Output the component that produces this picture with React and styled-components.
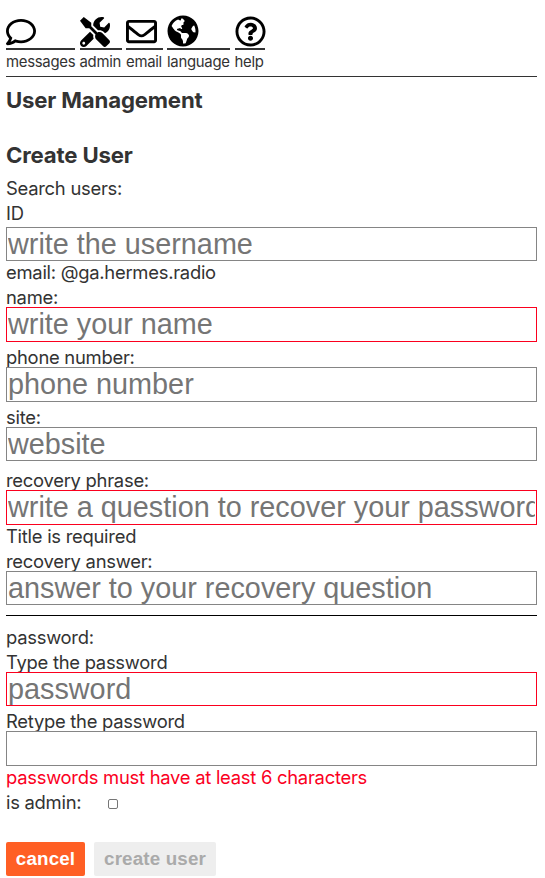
import React from "react";
import styled, { createGlobalStyle } from "styled-components";
import { FaRegComment, FaTools, FaRegEnvelope, FaGlobeAmericas, FaRegQuestionCircle } from "react-icons/fa";

const GlobalStyle = createGlobalStyle`
  *, *::before, *::after { box-sizing: border-box; }
  body {
    margin: 0;
    background: #fff;
    color: #333;
    font: 18.4px/23px Inter, "Noto Sans", sans-serif;
  }
`;

const Page = styled.div`
  padding: 16px 8px 2px 6px;
`;

const Nav = styled.nav`
  display: flex;
  gap: 4.5px;
  height: 61px;
  border-bottom: 1px solid #333;
`;

const NavItem = styled.a`
  width: ${(p) => p.$width}px;
  color: #333;
  font-size: 14.9px;
  letter-spacing: -0.28px;
  line-height: 24px;
  white-space: nowrap;
`;

const NavIcon = styled.span`
  display: flex;
  align-items: flex-start;
  height: 34px;
  border-bottom: 2px solid #333;

  svg {
    flex: none;
    width: ${(p) => p.$size}px;
    height: ${(p) => p.$size}px;
    margin-top: ${(p) => 30.5 - p.$size}px;
    color: #000;
  }
`;

const Title = styled.h1`
  margin: 9px 0 27px;
  font-size: 22.2px;
  font-weight: 700;
  letter-spacing: -0.17px;
  line-height: 28px;
`;

const Subtitle = styled(Title)`
  margin: 0 0 8px;
`;

const Form = styled.form`
  display: flex;
  flex-direction: column;
  gap: 4px;
`;

const Field = styled.div`
  display: flex;
  flex-direction: column;
  padding-top: ${(p) => p.$before || 0}px;
`;

const Line = styled.label`
  display: block;
  height: 21px;
  color: ${(p) => (p.$error ? "#fb001e" : "inherit")};
  letter-spacing: -0.26px;
  white-space: nowrap;
`;

const Input = styled.input`
  display: block;
  width: 100%;
  height: ${(p) => p.$height || 35}px;
  margin: ${(p) => p.$gap || 0}px 0 0;
  padding: 1px;
  border: 1px solid ${(p) => (p.$invalid ? "#fb001e" : "#858585")};
  border-radius: 0;
  outline: none;
  background: #fff;
  font: 28.8px "Liberation Sans", Arial, sans-serif;

  &::placeholder {
    color: #757575;
    opacity: 1;
  }
`;

const Divider = styled.hr`
  width: 100%;
  height: 1px;
  margin: 6px 0;
  border: 0;
  background: #000;
`;

const CheckRow = styled.div`
  display: flex;
`;

const CheckLabel = styled(Line)`
  width: 102px;
`;

const Checkbox = styled.input`
  appearance: none;
  width: 10px;
  height: 10px;
  margin: 8px 0 0;
  border: 1px solid #767676;
  border-radius: 2px;
  background: #fff;
`;

const Actions = styled.div`
  display: flex;
  gap: 9px;
  margin-top: 26px;
`;

const Button = styled.button`
  width: ${(p) => p.$width}px;
  height: 34px;
  padding: 0 0 1px;
  border: 0;
  border-radius: 2px;
  background: ${(p) => (p.disabled ? "#eee" : "#ff5f24")};
  color: ${(p) => (p.disabled ? "#aaa" : "#fff")};
  font: bold 18.8px "Liberation Sans", Arial, sans-serif;
  letter-spacing: 0.15px;
`;

const links = [
  { label: "messages", Icon: FaRegComment, width: 69, size: 30 },
  { label: "admin", Icon: FaTools, width: 42, size: 30 },
  { label: "email", Icon: FaRegEnvelope, width: 36.5, size: 31 },
  { label: "language", Icon: FaGlobeAmericas, width: 63, size: 32 },
  { label: "help", Icon: FaRegQuestionCircle, width: 30, size: 31 },
];

export default function App() {
  return (
    <>
      <GlobalStyle />
      <Page>
        <Nav>
          {links.map(({ label, Icon, width, size }) => (
            <NavItem key={label} $width={width}>
              <NavIcon $size={size}><Icon /></NavIcon>
              {label}
            </NavItem>
          ))}
        </Nav>
        <Title>User Management</Title>
        <Subtitle as="h2">Create User</Subtitle>
        <Form>
          <Line as="div">Search users:</Line>
          <Field>
            <Line>ID</Line>
            <Input $gap={4} $height={34} placeholder="write the username" />
            <Line as="div">email: @ga.hermes.radio</Line>
          </Field>
          <Field>
            <Line>name:</Line>
            <Input $invalid placeholder="write your name" />
          </Field>
          <Field>
            <Line>phone number:</Line>
            <Input placeholder="phone number" />
          </Field>
          <Field>
            <Line>site:</Line>
            <Input $height={34} placeholder="website" />
          </Field>
          <Field $before={4}>
            <Line>recovery phrase:</Line>
            <Input $invalid placeholder="write a question to recover your password" />
            <Line as="div">Title is required</Line>
          </Field>
          <Field>
            <Line>recovery answer:</Line>
            <Input $height={34} placeholder="answer to your recovery question" />
          </Field>
          <Divider />
          <Line as="div">password:</Line>
          <Field>
            <Line>Type the password</Line>
            <Input $invalid $height={34} type="password" placeholder="password" />
          </Field>
          <Field>
            <Line>Retype the password</Line>
            <Input type="password" />
            <Line as="div" $error>passwords must have at least 6 characters</Line>
          </Field>
          <CheckRow>
            <CheckLabel htmlFor="is-admin">is admin:</CheckLabel>
            <Checkbox id="is-admin" type="checkbox" />
          </CheckRow>
          <Actions>
            <Button type="button" $width={79}>cancel</Button>
            <Button type="submit" $width={122} disabled>create user</Button>
          </Actions>
        </Form>
      </Page>
    </>
  );
}
